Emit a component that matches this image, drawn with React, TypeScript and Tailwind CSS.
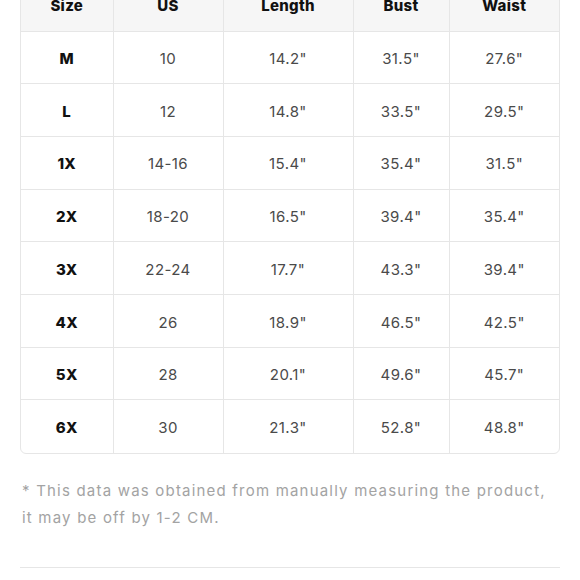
const rows = [
  ["M", "10", "14.2\"", "31.5\"", "27.6\""],
  ["L", "12", "14.8\"", "33.5\"", "29.5\""],
  ["1X", "14-16", "15.4\"", "35.4\"", "31.5\""],
  ["2X", "18-20", "16.5\"", "39.4\"", "35.4\""],
  ["3X", "22-24", "17.7\"", "43.3\"", "39.4\""],
  ["4X", "26", "18.9\"", "46.5\"", "42.5\""],
  ["5X", "28", "20.1\"", "49.6\"", "45.7\""],
  ["6X", "30", "21.3\"", "52.8\"", "48.8\""],
];

const headers = ["Size", "US", "Length", "Bust", "Waist"];
const widths = ["w-[92px]", "w-[110px]", "w-[130px]", "w-[96px]", "w-[110px]"];

export default function App() {
  return (
    <div className="min-h-[580px] bg-white font-['Inter',sans-serif]">
      <div className="mx-[20px] mt-[-23px]">
        <div className="overflow-hidden rounded-md border border-[#e6e6e6]">
          <table className="w-full table-fixed border-collapse text-center">
            <thead>
              <tr className="h-[53px] bg-[#f6f6f6]">
                {headers.map((h, i) => (
                  <th
                    key={h}
                    className={`${widths[i]} border-l border-[#e6e6e6] pt-[4px] text-[15px] font-extrabold tracking-[0.3px] text-[#111] first:border-l-0`}
                  >
                    {h}
                  </th>
                ))}
              </tr>
            </thead>
            <tbody>
              {rows.map((row) => (
                <tr key={row[0]} className="h-[52.7px] border-t border-[#e6e6e6]">
                  {row.map((cell, i) => (
                    <td
                      key={i}
                      className={`border-l border-[#e6e6e6] pt-[4px] first:border-l-0 ${
                        i === 0
                          ? "text-[15px] font-extrabold tracking-[0.3px] text-[#111]"
                          : "text-[15px] tracking-[0.4px] text-[#4a4a4a]"
                      }`}
                    >
                      {cell}
                    </td>
                  ))}
                </tr>
              ))}
            </tbody>
          </table>
        </div>

        <p className="mt-[23px] px-[2px] text-[15px] leading-[27px] tracking-[1.2px] text-[#a3a3a3]">
          * This data was obtained from manually measuring the product, it may be off by 1-2 CM.
        </p>

        <div className="mt-[36px] border-t border-[#e6e6e6]" />
      </div>
    </div>
  );
}
